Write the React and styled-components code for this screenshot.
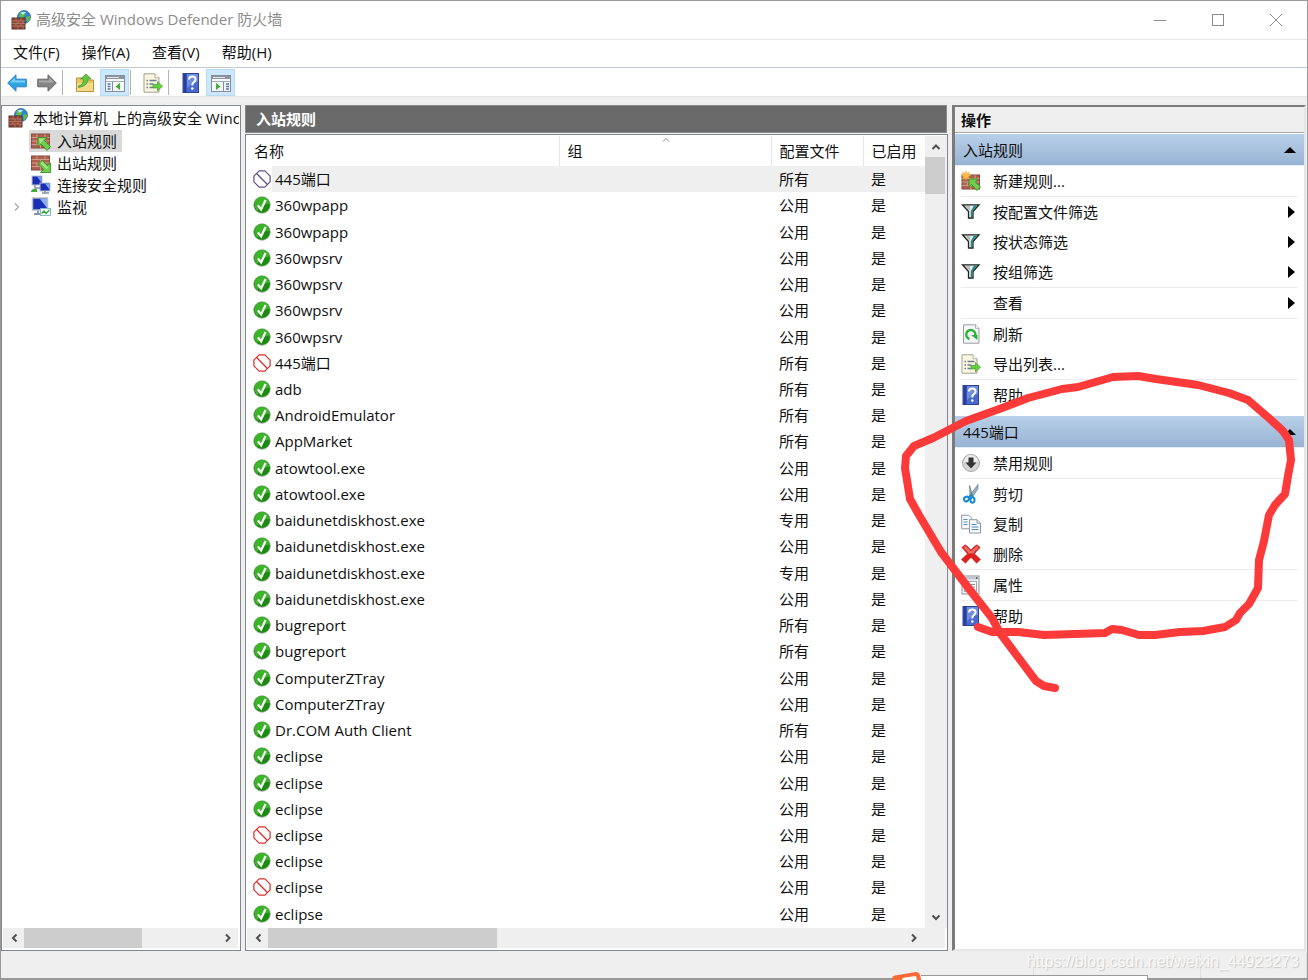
import React from "react";
import styled, { createGlobalStyle, css } from "styled-components";

const GlobalStyle = createGlobalStyle`
  * { box-sizing: border-box; }
  html, body { margin: 0; padding: 0; }
  body {
    font-family: "Open Sans", "Noto Sans CJK SC", sans-serif;
    font-size: 15px;
    line-height: 20px;
    color: #101010;
    background: #fff;
  }
  button {
    font: inherit;
    color: inherit;
    background: none;
    border: 0;
    margin: 0;
    padding: 0;
    text-align: left;
  }
`;

/* ---------- window frame ---------- */

const Window = styled.div`
  position: relative;
  display: flex;
  flex-direction: column;
  height: 100vh;
  min-height: 600px;
  overflow: hidden;
  background: #efefef;
  border: 1px solid #999;
  border-bottom: 0;
`;

const TitleBar = styled.header`
  display: flex;
  align-items: center;
  height: 39px;
  padding: 0 2px 0 10px;
  background: #fff;
  border-bottom: 1px solid #e6e6e6;
  color: #8c8c8c;
`;

const WindowTitle = styled.h1`
  flex: 1;
  margin: 0 0 2px 5px;
  font-size: 15px;
  font-weight: 400;
`;

const WindowButton = styled.button`
  display: flex;
  align-items: center;
  justify-content: center;
  width: 58px;
  height: 38px;
`;

const MenuBar = styled.nav`
  display: flex;
  gap: 22px;
  height: 28px;
  padding: 0 12px;
  background: #fff;
  border-bottom: 1px solid #c3cbd1;
`;

const MenuButton = styled.button`
  height: 24px;
`;

const ToolBar = styled.div`
  display: flex;
  align-items: flex-end;
  gap: 1px;
  height: 29px;
  padding-left: 1px;
  background: #fff;
  border-bottom: 1px solid #e6e6e6;
`;

const ToolButton = styled.button`
  display: flex;
  align-items: center;
  justify-content: center;
  width: 29px;
  height: 27px;
  background: ${(p) => (p.$pressed ? "#cce8ff" : "transparent")};
  border: 1px solid ${(p) => (p.$pressed ? "#b8dcf8" : "transparent")};
`;

const ToolDivider = styled.span`
  width: 1px;
  height: 25px;
  margin: 0 6px 1px 0;
  background: #b4b4b4;
`;

const Panes = styled.div`
  flex: 1;
  min-height: 0;
  display: grid;
  grid-template-columns: 240px minmax(0, 1fr) 354px;
  gap: 4px;
  padding: 8px 1px 0 0;
`;

/* ---------- scroll bars ---------- */

const HScroll = styled.div`
  flex: none;
  display: flex;
  align-items: center;
  height: 20px;
  margin: 0 2px 2px 1px;
  background: #efefef;
`;

const ScrollArrow = styled.button`
  flex: none;
  display: flex;
  align-items: center;
  justify-content: center;
  width: 21px;
  height: 21px;
`;

const ScrollTrack = styled.div`
  flex: 1;
  display: flex;
  align-self: stretch;
`;

const ScrollThumb = styled.div`
  width: ${(p) => p.$width || "100%"};
  height: ${(p) => p.$height || "100%"};
  background: #cdcdcd;
`;

const VScroll = styled.div`
  flex: none;
  display: flex;
  flex-direction: column;
  width: 22px;
  padding: 0 2px 1px 0;
  background: #efefef;
`;

/* ---------- tree ---------- */

const TreePane = styled.aside`
  display: flex;
  flex-direction: column;
  min-width: 0;
  min-height: 0;
  background: #fff;
  border: 1px solid #828790;
`;

const Tree = styled.ul`
  flex: 1;
  min-height: 0;
  overflow: hidden;
  margin: 0;
  padding: 0 1px 0 0;
  list-style: none;
`;

const TreeRow = styled.li`
  display: flex;
  align-items: center;
  height: ${(p) => (p.$root ? 24 : 22)}px;
  padding-left: ${(p) => (p.$root ? 4 : 7)}px;
`;

const Expander = styled.span`
  display: flex;
  align-items: center;
  justify-content: center;
  width: 16px;
  margin-right: 4px;
`;

const TreeButton = styled.button`
  display: flex;
  align-items: center;
  gap: ${(p) => (p.$root ? 5 : 6)}px;
  min-width: 0;
  height: 22px;
  padding: 0 ${(p) => (p.$root ? 0 : 5)}px 0 2px;
  white-space: nowrap;
  background: ${(p) => (p.$selected ? "#d9d9d9" : "transparent")};

  svg { flex: none; }
`;

const TreeLabel = styled.span`
  min-width: 0;
  overflow: hidden;
`;

/* ---------- rule list ---------- */

const ListPane = styled.main`
  display: flex;
  flex-direction: column;
  min-height: 0;
`;

const PaneTitle = styled.h2`
  margin: 0 1px 1px 0;
  height: 28px;
  padding-left: 10px;
  border: 1px solid #8a8a8a;
  font-size: 15px;
  line-height: 27px;
  font-weight: 700;
  color: #fff;
  background: #696969;
`;

const ListFrame = styled.section`
  flex: 1;
  min-height: 0;
  display: flex;
  flex-direction: column;
  background: #fff;
  border: 1px solid #828790;
`;

const ListBody = styled.div`
  flex: 1;
  min-height: 0;
  display: flex;
  padding-top: 1px;
`;

const TableArea = styled.div`
  flex: 1;
  min-width: 0;
  padding-bottom: 1px;
  overflow: hidden;
`;

const RuleTable = styled.table`
  width: 100%;
  height: 100%;
  table-layout: fixed;
  border-collapse: collapse;
`;

const HeadCell = styled.th`
  position: relative;
  width: ${(p) => p.$width || "auto"};
  height: 30px;
  padding: 0 0 0 8px;
  text-align: left;
  font-weight: 400;
  border-right: ${(p) => (p.$last ? 0 : 1)}px solid #e5e5e5;
`;

const SortMark = styled.svg`
  position: absolute;
  top: 1px;
  left: calc(50% - 3px);
`;

const Cell = styled.td`
  height: 26px;
  padding: 0 0 0 8px;
  line-height: 20px;
  white-space: nowrap;
  background: ${(p) => (p.$selected ? "#efefef" : "transparent")};
`;

const NameCell = styled(Cell)`
  padding-left: 7px;
  background: ${(p) =>
    p.$selected ? "linear-gradient(to right, #fff 26px, #efefef 26px)" : "transparent"};
`;

const NameLine = styled.span`
  display: flex;
  align-items: center;
  gap: 4px;
`;

/* ---------- actions ---------- */

const ActionsPane = styled.aside`
  position: relative;
  display: flex;
  flex-direction: column;
  min-height: 0;
  background: #fff;
  border-style: solid;
  border-width: 2px 2px 2px 3px;
  border-color: #7b7b7b #e6e6e6 #e6e6e6 #7b7b7b;
`;

const ActionsTitle = styled.h2`
  margin: 0 0 1px;
  height: 26px;
  padding-left: 6px;
  font-size: 15px;
  line-height: 27px;
  font-weight: 700;
  background: #efefef;
  border-bottom: 1px solid #a8a8a8;
`;

const GroupHeader = styled.button`
  display: flex;
  align-items: center;
  justify-content: space-between;
  width: 100%;
  height: 32px;
  padding: 0 8px;
  background: linear-gradient(#b8d0e9, #98b3d3);
  border-bottom: 1px solid #e3edf7;
`;

const ActionList = styled.ul`
  margin: 0 0 6px;
  padding: 0 6px;
  list-style: none;
`;

const ActionItem = styled.li`
  ${(p) =>
    p.$divided &&
    css`
      border-bottom: 1px solid #ececec;
    `}
`;

const ActionButton = styled.button`
  display: flex;
  align-items: center;
  width: 100%;
  height: 30px;
  padding-right: 3px;
`;

const ActionIcon = styled.span`
  display: flex;
  width: 20px;
  margin-right: 12px;
`;

const ActionLabel = styled.span`
  flex: 1;
`;

const Scribble = styled.svg`
  position: absolute;
  z-index: 2;
  top: 260px;
  left: -55px;
  pointer-events: none;
`;

/* ---------- bottom ---------- */

const StatusBar = styled.footer`
  flex: none;
  display: flex;
  justify-content: flex-end;
  height: 29px;
  border-bottom: 2px solid #999;
`;

const StatusCell = styled.span`
  width: ${(p) => p.$width}px;
  margin-top: 2px;
  border-right: 1px solid #e0e0e0;
`;

const Watermark = styled.span`
  position: absolute;
  right: 8px;
  bottom: 8px;
  font-family: "Liberation Sans", sans-serif;
  font-size: 16px;
  line-height: 20px;
  color: #f8f8f8;
  text-shadow: 1px 1px 1px #c8c8c8;
`;

const PopupEdge = styled.div`
  position: absolute;
  right: 159px;
  bottom: 0;
  display: flex;
  align-items: flex-end;
`;

const PopupBar = styled.span`
  width: 227px;
  height: 5px;
  background: #fff;
  border: solid #9a9a9a;
  border-width: 1px 1px 0 0;
`;

/* ---------- icons ---------- */

const Svg = ({ size = 20, children }) => (
  <svg width={size} height={size} viewBox="0 0 20 20" aria-hidden="true">
    {children}
  </svg>
);

const Bricks = ({ x = 0, y = 3, w = 18, h = 15 }) => (
  <g>
    <rect x={x} y={y} width={w} height={h} fill="#b0614d" stroke="#84493c" />
    <path
      d={`M${x} ${y + h / 4}h${w}M${x} ${y + h / 2}h${w}M${x} ${y + (h * 3) / 4}h${w}M${x + w * 0.3} ${y}v${h / 4}M${x + w * 0.75} ${y}v${h / 4}M${x + w * 0.5} ${y + h / 4}v${h / 4}M${x + w * 0.3} ${y + h / 2}v${h / 4}M${x + w * 0.75} ${y + h / 2}v${h / 4}M${x + w * 0.5} ${y + (h * 3) / 4}v${h / 4}`}
      stroke="#d3a090"
      strokeWidth="0.9"
      fill="none"
    />
  </g>
);

const Globe = () => (
  <g>
    <circle cx="13" cy="7" r="6.5" fill="#2f86c9" stroke="#1e5f95" strokeWidth="0.7" />
    <path d="M9 2q4 0 5 3l-2 3-4-1zM15 7l4-1q0 5-3 6z" fill="#5fbf4a" />
    <path d="M10 2.500q3-1.500 5 0q-2 2-4 2z" fill="#c7ecf9" />
  </g>
);

const FirewallIcon = () => (
  <Svg>
    <Globe />
    <rect x="1" y="8" width="13" height="11" fill="#8d4535" stroke="#5d3027" />
    <path
      d="M1 11h13M1 13.500h13M1 16h13M5 8v3M10 8v3M7 11v2.500M12 11v2.500M5 13.500v2.500M10 13.500v2.500M7 16v3M12 16v3"
      stroke="#b87d6c"
      strokeWidth="0.8"
      fill="none"
    />
  </Svg>
);

const InboundIcon = () => (
  <Svg>
    <Bricks x={0.5} y={3} w={18} h={14} />
    <path d="M7 6.500h9l-2.500 3 6 6-3.500 4-6-6.500-3 3z" fill="#6fce4b" stroke="#2f8a22" strokeWidth="0.8" />
    <path d="M8 7.500h5.500l-4.500 5z" fill="#a9e58c" />
  </Svg>
);

const OutboundIcon = () => (
  <Svg>
    <Bricks x={0.5} y={3} w={18} h={14} />
    <path d="M19.500 19.500h-10l3-3-5-5.500 3.500-4 5.500 5.500 3-2.500z" fill="#6fce4b" stroke="#2f8a22" strokeWidth="0.8" />
    <path d="M10.500 9.500l6 6" stroke="#a9e58c" strokeWidth="2" />
  </Svg>
);

const NewRuleIcon = () => (
  <Svg>
    <Bricks x={1} y={4} w={17.5} h={14} />
    <path d="M8 8h9l-2.500 3 5 5-3.500 3.500-5.500-6-2.500 3z" fill="#6fce4b" stroke="#2f8a22" strokeWidth="0.8" />
    <path d="M5 0l1 2.500 2.500-1.500-1.200 2.600 2.700 1-2.700 1 1.200 2.600-2.500-1.400-1 2.700-1-2.700-2.600 1.400 1.200-2.600-2.600-1 2.600-1-1.200-2.600 2.600 1.500z" fill="#ffc04a" stroke="#f0962a" strokeWidth="0.4" />
  </Svg>
);

const ConnectionIcon = () => (
  <Svg>
    <rect x="1" y="1" width="10" height="9" fill="#1b2fb5" stroke="#b9c1d3" />
    <path d="M6 1.500h4.500v6z" fill="#7ea2ec" />
    <rect x="9" y="8" width="10" height="8" fill="#1b2fb5" stroke="#b9c1d3" />
    <path d="M14 8.500h4.500v6z" fill="#7ea2ec" />
    <path d="M4 10v3h5M11 18h7M14 16v2" stroke="#8791a5" fill="none" strokeWidth="1.500" />
    <path d="M0 16l2-2h4v3H0z" fill="#41ae37" />
  </Svg>
);

const MonitorIcon = () => (
  <Svg>
    <rect x="1.500" y="1" width="15" height="12" fill="#1b2fb5" stroke="#b5bccb" strokeWidth="1.500" />
    <path d="M9 2h7v9z" fill="#8db0f0" />
    <path d="M3 17h8M7 14v3" stroke="#8993a6" strokeWidth="2" />
    <rect x="9.500" y="11.500" width="10" height="7" fill="#eefaff" stroke="#8ab6cf" />
    <path d="M10.500 16.500l2.500-2.500 2 2.500 3.500-3.500" stroke="#37a832" strokeWidth="1.300" fill="none" />
  </Svg>
);

const AllowIcon = () => (
  <Svg size={18}>
    <circle cx="10" cy="10" r="9.200" fill="#1d8a12" stroke="#93a491" strokeWidth="0.800" />
    <path d="M2 9.500a8 8 0 0 1 16-1q-8 0-13 8q-3-2-3-7z" fill="#3cb628" />
    <path d="M5.500 10.500l3.500 4.500 5-10.500" stroke="#fff" strokeWidth="2.400" fill="none" />
  </Svg>
);

const BlockIcon = ({ color }) => (
  <Svg size={18}>
    <path d="M6.800 1h6.400L19 6.800v6.400L13.200 19H6.800L1 13.200V6.800z" fill="#fff" stroke={color} strokeWidth="1.400" strokeLinejoin="round" />
    <path d="M4 4l12 12" stroke={color} strokeWidth="1.500" />
  </Svg>
);

const ArrowIcon = ({ forward }) => (
  <Svg>
    <g transform={forward ? "translate(20 0) scale(-1 1)" : undefined}>
      <path
        d="M0.700 10L9 1.800v4.400h10.300v7.600H9v4.400z"
        fill={forward ? "#858585" : "#30a5e6"}
        stroke={forward ? "#696969" : "#2583bf"}
        strokeLinejoin="round"
      />
      <path d="M3 9.500l5-5v3h10v2z" fill={forward ? "#a9a9a9" : "#7cd0f7"} />
    </g>
  </Svg>
);

const FolderUpIcon = () => (
  <Svg>
    <path d="M1.500 5h6l2 2h9v11.500h-17z" fill="#e9c463" stroke="#b99540" />
    <path d="M2 10h16v8H2z" fill="#f5da8c" />
    <path d="M3.500 13q5-1 5-7H5.500L11 1l5 5h-3q0 7-9.500 8.500z" fill="#63c63e" stroke="#3b962a" strokeWidth="0.700" />
  </Svg>
);

const PaneIcon = ({ right }) => (
  <svg width="20" height="18" viewBox="0 0 20 18" aria-hidden="true">
    <rect x="0.500" y="1.500" width="19" height="16" fill="#f7f8fa" stroke="#868e99" />
    <rect x="1" y="2" width="18" height="3" fill="#8b94a1" />
    <path d="M2 3.500h12" stroke="#dfe3e8" />
    <path d="M1 7.500h18" stroke="#a5adb8" />
    <path d={right ? "M12.500 7.500v10" : "M7.500 7.500v10"} stroke="#868e99" />
    <path d={right ? "M15 10h3M15 12.500h3M15 15h3" : "M2.500 10h3M2.500 12.500h3M2.500 15h3"} stroke="#4b78b8" strokeWidth="1.300" />
    <path d={right ? "M5 9v7l4.500-3.500z" : "M15 9v7l-4.500-3.500z"} fill="#3fae32" />
  </svg>
);

const ExportIcon = () => (
  <Svg>
    <path d="M1 0.800h11l4 4v14.400H1z" fill="#faf6df" stroke="#a3a08e" />
    <path d="M12 0.800v4h4" fill="#fff" stroke="#a3a08e" strokeWidth="0.800" />
    <path d="M3.500 7.500h1.500M3.500 11h1.500M3.500 14.500h1.500M6.500 7.500h7M6.500 11h4M6.500 14.500h4" stroke="#6e7c91" strokeWidth="1.300" />
    <path d="M10 11.500h4.500v-3l5 4.700-5 4.700v-3H10z" fill="#63d13e" stroke="#3e9f2b" strokeWidth="0.700" />
  </Svg>
);

const HelpIcon = () => (
  <Svg>
    <rect x="2" y="0.500" width="15.500" height="19" fill="#4a69cf" stroke="#2c458f" />
    <rect x="2.500" y="1" width="3" height="18" fill="#273f9a" />
    <path d="M6 1h11v8q-5 0-11 6z" fill="#6f8be0" />
    <path d="M8 6.500q0-3 3.300-3t3.300 2.800q0 1.700-1.700 2.800t-1.600 3.400" stroke="#fff" strokeWidth="2" fill="none" />
    <circle cx="11.300" cy="15.500" r="1.300" fill="#fff" />
  </Svg>
);

const FilterIcon = () => (
  <Svg>
    <path d="M1.500 2.800h16.500L12 9.500v6.500H7.500V9.500z" fill="#e6eaea" stroke="#222" strokeWidth="1.300" />
    <path d="M13 3.500h3.500L11.300 9.300v6H9.800V9.300z" fill="#16898c" />
    <path d="M4 4h5v5z" fill="#b6bdbd" />
  </Svg>
);

const RefreshIcon = () => (
  <Svg>
    <path d="M2.500 0.800h12l3.500 3.500v14.900H2.500z" fill="#f3f5f8" stroke="#9d9d9d" />
    <path d="M14.500 0.800v3.500h3.500" fill="#fff" stroke="#9d9d9d" strokeWidth="0.800" />
    <path d="M8.500 15a4.600 4.600 0 1 1 5.500-2.500" stroke="#2fb137" strokeWidth="2.400" fill="none" />
    <path d="M10 11h6.500v5z" fill="#2fb137" />
  </Svg>
);

const DisableIcon = () => (
  <Svg>
    <circle cx="10" cy="10" r="8.500" fill="#d5d5d5" stroke="#a9a9a9" />
    <path d="M3 9a7 7 0 0 1 14 0z" fill="#ececec" />
    <path d="M7.500 4.500h5V9.500h3L10 15.500l-5.500-6h3z" fill="#343434" />
  </Svg>
);

const CutIcon = () => (
  <Svg>
    <path d="M9 12L8.500 1.500l2.800 9zM8 12.500L17 0.500v4l-4.500 7z" fill="#9eb4c4" stroke="#60798b" strokeWidth="0.700" />
    <ellipse cx="5.500" cy="15" rx="2.500" ry="2.200" fill="none" stroke="#168ad0" strokeWidth="2" transform="rotate(-25 5.500 15)" />
    <ellipse cx="11.500" cy="16" rx="2" ry="2.700" fill="none" stroke="#168ad0" strokeWidth="2" />
    <path d="M7.500 13.500l3-2.500 1.500 2.500" stroke="#168ad0" strokeWidth="1.800" fill="none" />
  </Svg>
);

const CopyIcon = () => (
  <Svg>
    <path d="M0.700 1.200h7l3 3v10.600h-10z" fill="#f8fbfe" stroke="#8d99a8" />
    <path d="M2.500 5.500h4M2.500 8h4M2.500 10.500h4" stroke="#5489bf" />
    <path d="M8.500 5.700h7.500l3.500 3.500v9.800h-11z" fill="#f8fbfe" stroke="#8d99a8" />
    <path d="M16 5.700v3.500h3.500" fill="none" stroke="#8d99a8" />
    <path d="M10.500 10.500h5M10.500 13h7M10.500 15.500h7" stroke="#5489bf" />
  </Svg>
);

const DeleteIcon = () => (
  <Svg>
    <path d="M0.800 3.500L4 0.800q3.500 2 6 5.200 2.500-3.500 6-5.200l3.200 2.700q-3.500 3-5.700 6.500 3 2.500 6 5.500l-4 3.700q-2.500-3.200-5.500-5.700-3 2.500-5.500 5.700l-4-3.700q3-3 6-5.500-2.500-3.500-5.700-6.500z" fill="#e01f1f" stroke="#b53030" strokeWidth="0.700" />
    <path d="M2.500 3.500L4 2q3.500 2 6 5.500Q12.500 4 16 2l1.500 1.500Q14 6.500 12.500 9.500h-5Q6 6.500 2.500 3.500z" fill="#ee6f66" />
  </Svg>
);

const PropertiesIcon = () => (
  <Svg>
    <rect x="1" y="1" width="17" height="18" fill="#f1f2f4" stroke="#8b8f97" />
    <path d="M1.500 3h16" stroke="#c3c7ce" strokeWidth="3" />
    <rect x="3.500" y="6.500" width="12" height="10" fill="#fff" stroke="#a4a9b1" />
    <path d="M5.500 9.500h2M5.500 12h2M5.500 14.500h2M9 9.500h5M9 12h5M9 14.500h5" stroke="#8f949c" />
    <path d="M15 3h1.500" stroke="#454b55" strokeWidth="1.500" />
  </Svg>
);

const CHEVRONS = {
  left: "M7.500 1.500L4 5l3.500 3.500",
  right: "M3 1.500L6.500 5 3 8.500",
  up: "M1.500 7L5 3.500 8.500 7",
  down: "M1.500 3.500L5 7l3.500-3.500",
};

const Chevron = ({ dir, color = "#505050", weight = 2 }) => (
  <svg width="10" height="10" viewBox="0 0 10 10" aria-hidden="true">
    <path d={CHEVRONS[dir]} stroke={color} strokeWidth={weight} fill="none" />
  </svg>
);

const CollapseMark = () => (
  <svg width="12" height="6" viewBox="0 0 12 6" aria-hidden="true">
    <path d="M0 6L6 0l6 6z" fill="#000" />
  </svg>
);

const SubmenuMark = () => (
  <svg width="7" height="12" viewBox="0 0 7 12" aria-hidden="true">
    <path d="M0 0l7 6-7 6z" fill="#000" />
  </svg>
);

/* ---------- data ---------- */

const RULES = [
  ["445端口", "所有", "off"],
  ["360wpapp", "公用"],
  ["360wpapp", "公用"],
  ["360wpsrv", "公用"],
  ["360wpsrv", "公用"],
  ["360wpsrv", "公用"],
  ["360wpsrv", "公用"],
  ["445端口", "所有", "block"],
  ["adb", "所有"],
  ["AndroidEmulator", "所有"],
  ["AppMarket", "所有"],
  ["atowtool.exe", "公用"],
  ["atowtool.exe", "公用"],
  ["baidunetdiskhost.exe", "专用"],
  ["baidunetdiskhost.exe", "公用"],
  ["baidunetdiskhost.exe", "专用"],
  ["baidunetdiskhost.exe", "公用"],
  ["bugreport", "所有"],
  ["bugreport", "所有"],
  ["ComputerZTray", "公用"],
  ["ComputerZTray", "公用"],
  ["Dr.COM Auth Client", "所有"],
  ["eclipse", "公用"],
  ["eclipse", "公用"],
  ["eclipse", "公用"],
  ["eclipse", "公用", "block"],
  ["eclipse", "公用"],
  ["eclipse", "公用", "block"],
  ["eclipse", "公用"],
];

const TREE = [
  { label: "入站规则", Icon: InboundIcon, selected: true },
  { label: "出站规则", Icon: OutboundIcon },
  { label: "连接安全规则", Icon: ConnectionIcon },
  { label: "监视", Icon: MonitorIcon, expandable: true },
];

const GROUPS = [
  {
    title: "入站规则",
    items: [
      { label: "新建规则...", Icon: NewRuleIcon, divided: true },
      { label: "按配置文件筛选", Icon: FilterIcon, submenu: true },
      { label: "按状态筛选", Icon: FilterIcon, submenu: true },
      { label: "按组筛选", Icon: FilterIcon, submenu: true, divided: true },
      { label: "查看", submenu: true, divided: true },
      { label: "刷新", Icon: RefreshIcon },
      { label: "导出列表...", Icon: ExportIcon, divided: true },
      { label: "帮助", Icon: HelpIcon },
    ],
  },
  {
    title: "445端口",
    items: [
      { label: "禁用规则", Icon: DisableIcon, divided: true },
      { label: "剪切", Icon: CutIcon },
      { label: "复制", Icon: CopyIcon },
      { label: "删除", Icon: DeleteIcon, divided: true },
      { label: "属性", Icon: PropertiesIcon, divided: true },
      { label: "帮助", Icon: HelpIcon },
    ],
  },
];

const StateIcon = ({ state }) => {
  if (state === "off") return <BlockIcon color="#66528c" />;
  if (state === "block") return <BlockIcon color="#d8322c" />;
  return <AllowIcon />;
};

const HorizontalScroll = ({ thumb, corner }) => (
  <HScroll>
    <ScrollArrow aria-label="向左滚动"><Chevron dir="left" /></ScrollArrow>
    <ScrollTrack><ScrollThumb $width={thumb} /></ScrollTrack>
    <ScrollArrow aria-label="向右滚动"><Chevron dir="right" /></ScrollArrow>
    {corner && <ScrollArrow as="span" />}
  </HScroll>
);

export default function App() {
  return (
    <Window>
      <GlobalStyle />
      <TitleBar>
        <FirewallIcon />
        <WindowTitle>高级安全 Windows Defender 防火墙</WindowTitle>
        <WindowButton aria-label="最小化">
          <svg width="12" height="12"><path d="M0 6.500h12" stroke="#8c8c8c" /></svg>
        </WindowButton>
        <WindowButton aria-label="最大化">
          <svg width="12" height="12"><rect x="0.500" y="0.500" width="11" height="11" fill="none" stroke="#8c8c8c" /></svg>
        </WindowButton>
        <WindowButton aria-label="关闭">
          <svg width="12" height="12"><path d="M0 0l12 12M12 0L0 12" stroke="#8c8c8c" /></svg>
        </WindowButton>
      </TitleBar>

      <MenuBar>
        {["文件(F)", "操作(A)", "查看(V)", "帮助(H)"].map((m) => (
          <MenuButton key={m}>{m}</MenuButton>
        ))}
      </MenuBar>

      <ToolBar>
        <ToolButton aria-label="后退"><ArrowIcon /></ToolButton>
        <ToolButton aria-label="前进"><ArrowIcon forward /></ToolButton>
        <ToolDivider />
        <ToolButton aria-label="向上"><FolderUpIcon /></ToolButton>
        <ToolButton $pressed aria-label="显示控制台树"><PaneIcon /></ToolButton>
        <ToolDivider />
        <ToolButton aria-label="导出列表"><ExportIcon /></ToolButton>
        <ToolDivider />
        <ToolButton aria-label="帮助"><HelpIcon /></ToolButton>
        <ToolButton $pressed aria-label="显示操作窗格"><PaneIcon right /></ToolButton>
      </ToolBar>

      <Panes>
        <TreePane>
          <Tree>
            <TreeRow $root>
              <TreeButton $root>
                <FirewallIcon />
                <TreeLabel>本地计算机 上的高级安全 Wind</TreeLabel>
              </TreeButton>
            </TreeRow>
            {TREE.map(({ label, Icon, selected, expandable }) => (
              <TreeRow key={label}>
                <Expander>
                  {expandable && <Chevron dir="right" color="#a6a6a6" weight={1.2} />}
                </Expander>
                <TreeButton $selected={selected}>
                  <Icon />
                  <TreeLabel>{label}</TreeLabel>
                </TreeButton>
              </TreeRow>
            ))}
          </Tree>
          <HorizontalScroll thumb="61%" />
        </TreePane>

        <ListPane>
          <PaneTitle>入站规则</PaneTitle>
          <ListFrame>
            <ListBody>
              <TableArea>
                <RuleTable>
                  <thead>
                    <tr>
                      <HeadCell>名称</HeadCell>
                      <HeadCell $width="212px">
                        组
                        <SortMark width="8" height="6" viewBox="0 0 8 6">
                          <path d="M1 4.500l3-3 3 3" stroke="#8a8a8a" fill="none" />
                        </SortMark>
                      </HeadCell>
                      <HeadCell $width="92px">配置文件</HeadCell>
                      <HeadCell $width="62px" $last>已启用</HeadCell>
                    </tr>
                  </thead>
                  <tbody>
                    {RULES.map(([name, profile, state], i) => (
                      <tr key={i}>
                        <NameCell $selected={i === 0}>
                          <NameLine>
                            <StateIcon state={state} />
                            {name}
                          </NameLine>
                        </NameCell>
                        <Cell $selected={i === 0} />
                        <Cell $selected={i === 0}>{profile}</Cell>
                        <Cell $selected={i === 0}>是</Cell>
                      </tr>
                    ))}
                  </tbody>
                </RuleTable>
              </TableArea>
              <VScroll>
                <ScrollArrow aria-label="向上滚动"><Chevron dir="up" /></ScrollArrow>
                <ScrollTrack><ScrollThumb $height="5%" /></ScrollTrack>
                <ScrollArrow aria-label="向下滚动"><Chevron dir="down" /></ScrollArrow>
              </VScroll>
            </ListBody>
            <HorizontalScroll thumb="36%" corner />
          </ListFrame>
        </ListPane>

        <ActionsPane>
          <ActionsTitle>操作</ActionsTitle>
          {GROUPS.map(({ title, items }) => (
            <React.Fragment key={title}>
              <GroupHeader>
                {title}
                <CollapseMark />
              </GroupHeader>
              <ActionList>
                {items.map(({ label, Icon, submenu, divided }) => (
                  <ActionItem key={label} $divided={divided}>
                    <ActionButton>
                      <ActionIcon>{Icon && <Icon />}</ActionIcon>
                      <ActionLabel>{label}</ActionLabel>
                      {submenu && <SubmenuMark />}
                    </ActionButton>
                  </ActionItem>
                ))}
              </ActionList>
            </React.Fragment>
          ))}
          <Scribble width="400" height="330" viewBox="900 367 400 330" aria-hidden="true">
            <path
              d="M978 627L992 632 1018 632 1044 635 1105 633 1112 629 1122 630 1139 635 1155 635 1180 632 1203 631 1225 627 1236 620 1240 613 1249 604 1258 588 1259 560 1264 541 1269 515 1275 505 1285 494 1288 476 1291 460 1289 440 1283 431 1270 419 1248 400 1229 393 1198 385 1156 379 1138 376 1113 377 1078 387 1062 389 1028 398 1002 408 966 421 933 438 914 446 906 456 905 468 910 499 919 515 941 552 973 594 992 618 1000 633 1036 681 1044 686 1055 688"
              fill="none"
              stroke="#fb3a39"
              strokeWidth="8"
              strokeLinecap="round"
              strokeLinejoin="round"
            />
          </Scribble>
        </ActionsPane>
      </Panes>

      <StatusBar>
        <StatusCell $width={166} />
        <StatusCell $width={167} />
        <StatusCell $width={106} />
      </StatusBar>
      <PopupEdge>
        <svg width="29" height="8" viewBox="0 0 29 8" aria-hidden="true">
          <path d="M0 7Q0 4 3 3.500L24 0q3 0 4 3l1 5H0z" fill="#f96a37" />
          <path d="M10 8q0-2 3-2.500l11-1.500 1 4z" fill="#fff" />
        </svg>
        <PopupBar />
      </PopupEdge>
      <Watermark>https://blog.csdn.net/weixin_44923273</Watermark>
    </Window>
  );
}
